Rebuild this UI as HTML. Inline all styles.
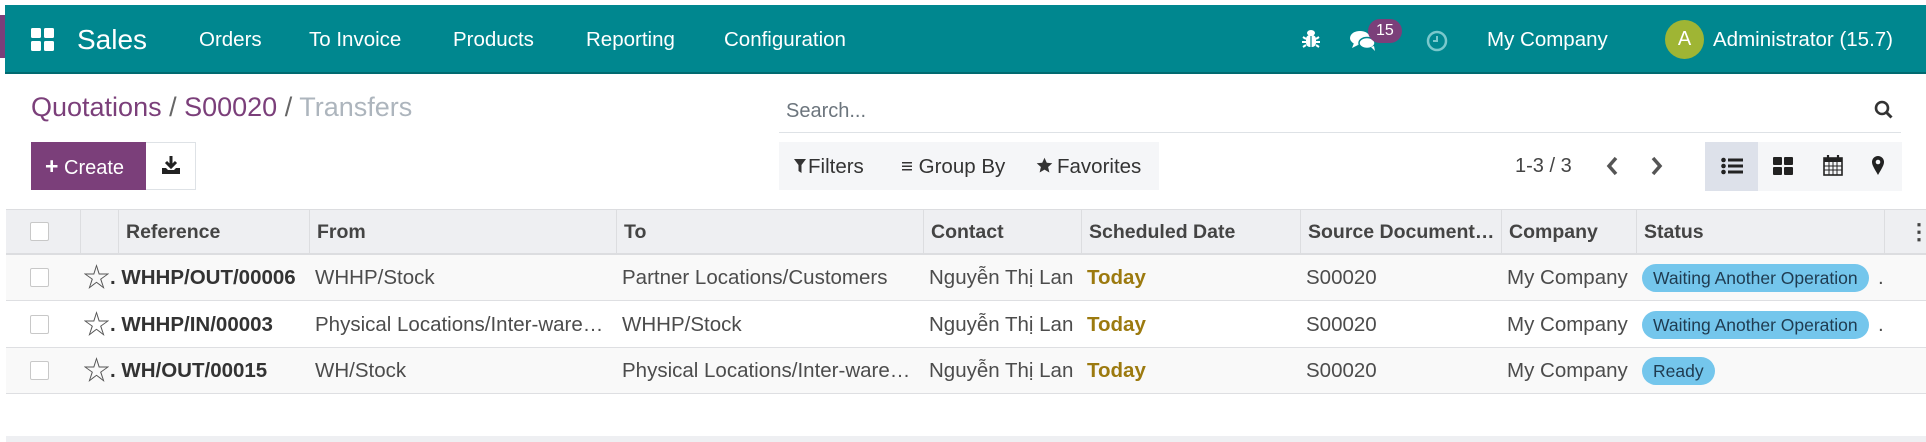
<!DOCTYPE html>
<html><head><meta charset="utf-8"><style>
*{box-sizing:border-box;margin:0;padding:0}
body{width:1926px;height:442px;background:#fff;font-family:"Liberation Sans","Noto Sans CJK SC",sans-serif;position:relative;overflow:hidden;color:#4c4c4c}
.a{position:absolute;white-space:nowrap}
.nav{position:absolute;left:5px;top:5px;width:1921px;height:69px;background:#00878f;border-bottom:2px solid #006a70}
.nav .t{position:absolute;top:0;line-height:69px;color:#fff;font-size:20.5px}
.hd{position:absolute;left:6px;top:209px;width:1920px;height:46px;background:#eeeff2;border-top:1px solid #dcdde0;border-bottom:2px solid #dcdde0}
.hd .c{position:absolute;top:0;height:44px;line-height:44px;font-weight:bold;font-size:19.5px;color:#444;border-left:1px solid #dcdde0;padding-left:7px}
.row{position:absolute;left:6px;width:1920px;height:46px;border-bottom:1px solid #dedfe2}
.row .c{position:absolute;top:0;line-height:46px;font-size:20.5px;color:#4c4c4c}
.cb{position:absolute;width:19px;height:19px;border:1px solid #c8c8c8;background:#fff;border-radius:2px}
.bd{position:absolute;top:9px;height:28px;line-height:28px;background:#74c6ec;border-radius:14px;padding:0 11px;font-size:17.5px;color:#1f3b50}
.fb{font-size:20.5px;color:#333;top:155px}
</style></head><body>
<div class="a" style="left:0;top:15px;width:5px;height:43px;background:#7b3f7a"></div>
<div class="nav">
  <svg class="a" style="left:26px;top:23px" width="23" height="23" viewBox="0 0 23 23"><rect x="0" y="0" width="10" height="10" rx="1.5" fill="#fff"/><rect x="13" y="0" width="10" height="10" rx="1.5" fill="#fff"/><rect x="0" y="13" width="10" height="10" rx="1.5" fill="#fff"/><rect x="13" y="13" width="10" height="10" rx="1.5" fill="#fff"/></svg>
  <div class="t" style="left:72px;font-size:28px">Sales</div>
  <div class="t" style="left:194px">Orders</div>
  <div class="t" style="left:304px">To Invoice</div>
  <div class="t" style="left:448px">Products</div>
  <div class="t" style="left:581px">Reporting</div>
  <div class="t" style="left:719px">Configuration</div>
  <svg class="a" style="left:1297px;top:24px" width="18" height="20" viewBox="0 0 18 20"><ellipse cx="9" cy="4" rx="4" ry="3" fill="#fff"/><rect x="4" y="6" width="10" height="12" rx="4" fill="#fff"/><path d="M1 8l3 2M17 8l-3 2M0 13h4M18 13h-4M1 18l3-2M17 18l-3-2" stroke="#fff" stroke-width="2"/><line x1="9" y1="7" x2="9" y2="18" stroke="#00878f" stroke-width="1.2"/></svg>
  <svg class="a" style="left:1345px;top:25px" width="28" height="22" viewBox="0 0 28 22"><ellipse cx="10" cy="8" rx="10" ry="7" fill="#fff"/><path d="M4 13l-2 5 6-3z" fill="#fff"/><ellipse cx="17" cy="13" rx="8" ry="5.5" fill="#fff" stroke="#00878f" stroke-width="1.5"/><path d="M21 17l4 4-1-5z" fill="#fff"/></svg>
  <div class="a" style="left:1363px;top:14px;height:24px;line-height:24px;padding:0 8px;background:#7b3f7a;color:#fff;border-radius:12px;font-size:16px">15</div>
  <svg class="a" style="left:1421px;top:25px" width="22" height="22" viewBox="0 0 22 22"><circle cx="11" cy="11" r="9" fill="none" stroke="#7ac8cc" stroke-width="2.5"/><path d="M11 6v5H7" fill="none" stroke="#7ac8cc" stroke-width="2"/></svg>
  <div class="t" style="left:1482px">My Company</div>
  <div class="a" style="left:1660px;top:15px;width:39px;height:39px;border-radius:50%;background:#9fb534;color:#fff;font-size:20px;line-height:39px;text-align:center">A</div>
  <div class="t" style="left:1708px">Administrator (15.7)</div>
</div>
<div class="a" style="left:31px;top:92px;font-size:27px;color:#7b3f7a">Quotations <span style="color:#666">/</span> S00020 <span style="color:#666">/</span> <span style="color:#adb5bd">Transfers</span></div>
<div class="a" style="left:779px;top:96px;width:1122px;height:37px;border-bottom:1px solid #dee2e6"></div>
<div class="a" style="left:786px;top:100px;font-size:20px;color:#6c757d">Search...</div>
<svg class="a" style="left:1874px;top:100px" width="20" height="20" viewBox="0 0 20 20"><circle cx="8" cy="8" r="6" fill="none" stroke="#333" stroke-width="2.6"/><path d="M12.5 12.5l5 5" stroke="#333" stroke-width="3"/></svg>
<div class="a" style="left:31px;top:142px;width:115px;height:48px;background:#7b3f7a;color:#fff;font-size:20px;line-height:48px;padding-left:14px"><b style="font-size:23px">+</b> Create</div>
<div class="a" style="left:146px;top:142px;width:50px;height:48px;border:1px solid #dee2e6;border-left:none"></div>
<svg class="a" style="left:161px;top:155px" width="20" height="20" viewBox="0 0 20 20"><path d="M10 1v10M5 7l5 5 5-5" fill="none" stroke="#222" stroke-width="3"/><path d="M1 13v6h18v-6h-4l-2 2H7l-2-2z" fill="#222"/></svg>
<div class="a" style="left:779px;top:142px;width:380px;height:48px;background:#f5f6f8"></div>
<svg class="a" style="left:794px;top:159px" width="12" height="14" viewBox="0 0 12 14"><path d="M0 0h12L7.5 6v8L4.5 12V6z" fill="#333"/></svg>
<div class="a fb" style="left:808px">Filters</div>
<div class="a fb" style="left:901px">≡ Group By</div>
<svg class="a" style="left:1036px;top:157px" width="17" height="17" viewBox="0 0 24 24"><path d="M12 1l3.2 7.2 7.8.7-5.9 5.2 1.8 7.7L12 17.8 5.1 21.8l1.8-7.7L1 8.9l7.8-.7z" fill="#333"/></svg>
<div class="a fb" style="left:1057px">Favorites</div>
<div class="a" style="left:1515px;top:155px;font-size:20px;color:#444">1-3 / 3</div>
<svg class="a" style="left:1605px;top:156px" width="14" height="20" viewBox="0 0 14 20"><path d="M11 2L4 10l7 8" fill="none" stroke="#555" stroke-width="3.5"/></svg>
<svg class="a" style="left:1650px;top:156px" width="14" height="20" viewBox="0 0 14 20"><path d="M3 2l7 8-7 8" fill="none" stroke="#555" stroke-width="3.5"/></svg>
<div class="a" style="left:1705px;top:142px;width:197px;height:49px;background:#f5f6f8"></div>
<div class="a" style="left:1705px;top:142px;width:53px;height:49px;background:#dde1ea"></div>
<svg class="a" style="left:1721px;top:157px" width="22" height="18" viewBox="0 0 22 18"><circle cx="2.5" cy="3" r="2.3" fill="#222"/><circle cx="2.5" cy="9" r="2.3" fill="#222"/><circle cx="2.5" cy="15" r="2.3" fill="#222"/><rect x="7" y="1.5" width="15" height="3" fill="#222"/><rect x="7" y="7.5" width="15" height="3" fill="#222"/><rect x="7" y="13.5" width="15" height="3" fill="#222"/></svg>
<svg class="a" style="left:1773px;top:157px" width="20" height="18" viewBox="0 0 20 18"><rect x="0" y="0" width="9" height="8" rx="1" fill="#222"/><rect x="11" y="0" width="9" height="8" rx="1" fill="#222"/><rect x="0" y="10" width="9" height="8" rx="1" fill="#222"/><rect x="11" y="10" width="9" height="8" rx="1" fill="#222"/></svg>
<svg class="a" style="left:1823px;top:155px" width="20" height="21" viewBox="0 0 20 21"><rect x="1" y="3" width="18" height="17" fill="none" stroke="#222" stroke-width="1.6"/><rect x="1" y="3" width="18" height="4" fill="#222"/><path d="M5 0v5M15 0v5" stroke="#222" stroke-width="2.2"/><path d="M1 11h18M1 15h18M6 7v13M10 7v13M14 7v13" stroke="#222" stroke-width="1"/></svg>
<svg class="a" style="left:1871px;top:155px" width="14" height="21" viewBox="0 0 14 21"><path d="M7 20C3 13 1 10 1 7a6 6 0 0 1 12 0c0 3-2 6-6 13z" fill="#222"/><circle cx="7" cy="7" r="2.3" fill="#f5f6f8"/></svg>
<div class="hd">
  <div class="cb" style="left:24px;top:12px"></div>
  <div class="c" style="left:74px;width:38px"></div>
  <div class="c" style="left:112px">Reference</div>
  <div class="c" style="left:303px">From</div>
  <div class="c" style="left:610px">To</div>
  <div class="c" style="left:917px">Contact</div>
  <div class="c" style="left:1075px">Scheduled Date</div>
  <div class="c" style="left:1294px">Source Document…</div>
  <div class="c" style="left:1495px">Company</div>
  <div class="c" style="left:1630px">Status</div>
  <div class="c" style="left:1878px"></div>
  <div class="c" style="left:1895px;border:none;font-size:22px">⋮</div>
</div>
<div class="row" style="top:255px;background:#f9f9f9">
  <div class="cb" style="left:24px;top:13px"></div>
  <div class="c" style="left:77px;font-size:27px;color:#555">☆</div>
  <div class="c" style="left:104px;font-weight:bold;color:#333">. WHHP/OUT/00006</div>
  <div class="c" style="left:309px">WHHP/Stock</div>
  <div class="c" style="left:616px">Partner Locations/Customers</div>
  <div class="c" style="left:923px">Nguyễn Thị Lan</div>
  <div class="c" style="left:1081px;font-weight:bold;color:#9c7a0f">Today</div>
  <div class="c" style="left:1300px">S00020</div>
  <div class="c" style="left:1501px">My Company</div>
  <div class="bd" style="left:1636px">Waiting Another Operation</div>
  <div class="c" style="left:1872px">.</div>
</div>
<div class="row" style="top:302px;background:#fff">
  <div class="cb" style="left:24px;top:13px"></div>
  <div class="c" style="left:77px;font-size:27px;color:#555">☆</div>
  <div class="c" style="left:104px;font-weight:bold;color:#333">. WHHP/IN/00003</div>
  <div class="c" style="left:309px">Physical Locations/Inter-ware…</div>
  <div class="c" style="left:616px">WHHP/Stock</div>
  <div class="c" style="left:923px">Nguyễn Thị Lan</div>
  <div class="c" style="left:1081px;font-weight:bold;color:#9c7a0f">Today</div>
  <div class="c" style="left:1300px">S00020</div>
  <div class="c" style="left:1501px">My Company</div>
  <div class="bd" style="left:1636px">Waiting Another Operation</div>
  <div class="c" style="left:1872px">.</div>
</div>
<div class="row" style="top:348px;background:#f9f9f9">
  <div class="cb" style="left:24px;top:13px"></div>
  <div class="c" style="left:77px;font-size:27px;color:#555">☆</div>
  <div class="c" style="left:104px;font-weight:bold;color:#333">. WH/OUT/00015</div>
  <div class="c" style="left:309px">WH/Stock</div>
  <div class="c" style="left:616px">Physical Locations/Inter-ware…</div>
  <div class="c" style="left:923px">Nguyễn Thị Lan</div>
  <div class="c" style="left:1081px;font-weight:bold;color:#9c7a0f">Today</div>
  <div class="c" style="left:1300px">S00020</div>
  <div class="c" style="left:1501px">My Company</div>
  <div class="bd" style="left:1636px">Ready</div>
</div>
<div class="a" style="left:6px;top:436px;width:1920px;height:6px;background:#eeeff2"></div>
</body></html>
